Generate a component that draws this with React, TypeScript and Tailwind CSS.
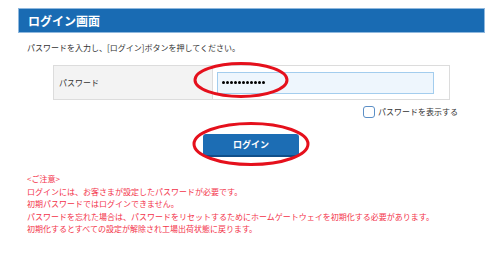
const notes = [
  "<ご注意>",
  "ログインには、お客さまが設定したパスワードが必要です。",
  "初期パスワードではログインできません。",
  "パスワードを忘れた場合は、パスワードをリセットするためにホームゲートウェイを初期化する必要があります。",
  "初期化するとすべての設定が解除され工場出荷状態に戻ります。",
];

const dots = Array.from({ length: 11 }, (_, i) => i);

export default function App() {
  return (
    <div
      className="relative h-[256px] w-[500px] overflow-hidden bg-white pt-[8px] text-[#333]"
      style={{ fontFamily: '"Noto Sans CJK JP", "Noto Sans", sans-serif' }}
    >
      <div className="ml-[18px] flex h-[25px] w-[467px] items-center border border-[#8fb8de] bg-[#196bb3] pl-[9px] text-[12px] font-bold text-white">
        ログイン画面
      </div>

      <p className="mt-[9px] ml-[27px] text-[8px] leading-[12px]">
        パスワードを入力し、[ログイン]ボタンを押してください。
      </p>

      <div className="mt-[11px] ml-[53px] flex h-[35px] w-[397px] border border-[#dcdcdc]">
        <div className="flex w-[159px] items-center border-r border-[#dcdcdc] bg-[#f3f3f3] pl-[5px] text-[8px]">
          パスワード
        </div>
        <div className="flex flex-1 items-center pl-[4px]">
          <div className="flex h-[22px] w-[217px] items-center gap-[1px] border border-[#a3cdee] bg-[#eef6fd] pl-[4px]">
            {dots.map((d) => (
              <span key={d} className="h-[3px] w-[3px] rounded-full bg-black" />
            ))}
          </div>
        </div>
      </div>

      <div className="mt-[5px] ml-[363px] flex items-center gap-[3px] text-[8px] leading-[13px]">
        <span className="h-[12px] w-[12px] rounded-[3px] border border-[#5c8fc6] bg-white" />
        パスワードを表示する
      </div>

      <div className="mt-[16px] ml-[203px] flex h-[23px] w-[96px] items-center justify-center rounded-[3px] border-b-2 border-[#0f4f8a] bg-[#1c6db4] text-[9px] font-bold text-white">
        ログイン
      </div>

      <div className="mt-[16px] ml-[27px] text-[8px] leading-[12.6px] text-[#f3334a]">
        {notes.map((n) => (
          <div key={n}>{n}</div>
        ))}
      </div>

      <svg className="pointer-events-none absolute left-0 top-0" width="500" height="256">
        <ellipse cx="241" cy="80" rx="46" ry="16.5" fill="none" stroke="#e5101c" strokeWidth="3" />
        <ellipse cx="251" cy="144" rx="57" ry="20.5" fill="none" stroke="#e5101c" strokeWidth="3" />
      </svg>
    </div>
  );
}
